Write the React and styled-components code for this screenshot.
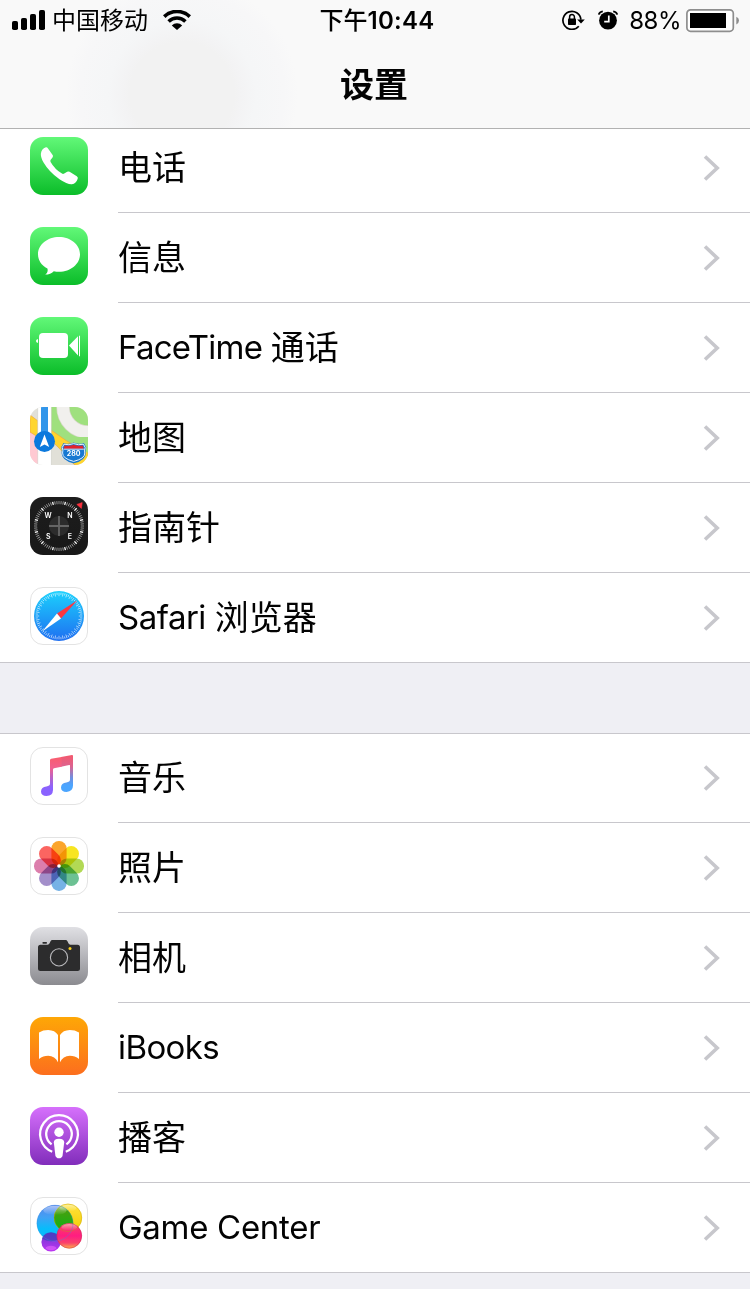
import React from "react"
import styled, { createGlobalStyle } from "styled-components"

const colors = {
  bar: "#f9f9f9",
  barLine: "#b2b2b2",
  page: "#efeff4",
  line: "#c8c7cc",
  white: "#ffffff",
  black: "#030303",
}

const GlobalStyle = createGlobalStyle`
  * {
    box-sizing: border-box;
  }

  body {
    margin: 0;
    background-color: ${colors.page};
    color: ${colors.black};
    font-family: Inter, "Noto Sans CJK SC", sans-serif;
  }
`

/* ---------- status bar ---------- */

const SignalIcon = () => (
  <svg width="34" height="22" viewBox="0 0 34 22">
    <rect x="0" y="12" width="6" height="9" rx="1.8" />
    <rect x="9" y="9" width="6" height="12" rx="1.8" />
    <rect x="18" y="5" width="6" height="16" rx="1.8" />
    <rect x="27" y="1" width="6" height="20" rx="1.8" />
  </svg>
)

const WifiIcon = () => (
  <svg width="28" height="20" viewBox="0 0 28 20">
    <path d="M1.2 6.6A18.6 18.6 0 0 1 26.8 6.6" fill="none" stroke="#000" strokeWidth="3.7" />
    <path d="M5.6 11.5A12 12 0 0 1 22.4 11.5" fill="none" stroke="#000" strokeWidth="3.5" />
    <path d="M14 20L8.8 15.4A7.2 7.2 0 0 1 19.2 15.4Z" />
  </svg>
)

const RotationLockIcon = () => (
  <svg width="23" height="20" viewBox="0 0 23 20">
    <path
      d="M16.8 16.2A9 9 0 1 1 18.9 9.6"
      fill="none"
      stroke="#000"
      strokeWidth="1.7"
    />
    <path d="M15.2 9.4H22.8L19 13.6Z" />
    <rect x="6" y="8.4" width="8" height="6.6" rx="0.8" />
    <path d="M7.6 9V7A2.4 2.4 0 0 1 12.4 7V9" fill="none" stroke="#000" strokeWidth="1.5" />
  </svg>
)

const AlarmIcon = () => (
  <svg width="20" height="20" viewBox="0 0 20 20">
    <circle cx="10" cy="10.6" r="8.9" />
    <path
      d="M0.8 4.6Q1.4 1.9 4.8 1.4M19.2 4.6Q18.6 1.9 15.2 1.4"
      fill="none"
      stroke="#000"
      strokeWidth="1.8"
    />
    <path d="M10.8 5.4V11.6H6.2" fill="none" stroke="#fff" strokeWidth="1.7" />
  </svg>
)

const BatteryIcon = () => (
  <svg width="54" height="24" viewBox="0 0 54 24">
    <rect x="0.9" y="0.9" width="46.4" height="21.4" rx="3.6" fill="#fff" stroke="#8e8e8e" strokeWidth="1.7" />
    <rect x="4" y="4" width="36" height="15" />
    <path d="M50.3 7.8Q53 9 53 11.6T50.3 15.4Z" fill="#8e8e8e" />
  </svg>
)

/* ---------- app icons ---------- */

const Gradient = ({ id, from, to }) => (
  <linearGradient id={id} x1="0" y1="0" x2="0" y2="1">
    <stop offset="0" stopColor={from} />
    <stop offset="1" stopColor={to} />
  </linearGradient>
)

const Tile = ({ id, from, to, children }) => (
  <svg width="58" height="58" viewBox="0 0 58 58">
    <defs>
      <Gradient id={id} from={from} to={to} />
    </defs>
    <rect width="58" height="58" rx="13" fill={`url(#${id})`} />
    {children}
  </svg>
)

const WhiteTile = ({ children }) => (
  <svg width="58" height="58" viewBox="0 0 58 58">
    <rect x="0.5" y="0.5" width="57" height="57" rx="12.5" fill="#fff" stroke="#e3e3e3" />
    {children}
  </svg>
)

const PhoneIcon = () => (
  <Tile id="phone" from="#62f878" to="#0bbd29">
    <path
      fill="#fff"
      d="M15.2 10.6Q16.9 9.8 18 11.4L22.8 18.2Q23.3 19.3 22.5 20.4L20.7 22.8Q20 23.9 20.6 25Q24.8 32.4 32 36.6Q33.1 37.2 34.2 36.5L37.2 34.8Q38.4 34.1 39.6 34.8L46.8 39.2Q48.3 40.2 47.7 41.8Q46.2 46.6 41.9 47.3Q37.6 47.7 29.5 42.3Q19 34.8 13.4 25.2Q10.4 19.8 10.9 16.4Q11.5 12.3 15.2 10.6Z"
    />
  </Tile>
)

const MessagesIcon = () => (
  <Tile id="messages" from="#62f878" to="#0bbd29">
    <path
      fill="#fff"
      d="M29 10C17.4 10 8 17.6 8 27.2C8 33.2 11.4 38.2 17.4 41.6C18.2 44 17.2 46.2 15.2 47.6C18.8 47.6 21.6 46.4 23.8 44.2C25.4 44.6 27.2 44.8 29 44.8C40.6 44.8 50 37 50 27.2C50 17.6 40.6 10 29 10Z"
    />
  </Tile>
)

const FaceTimeIcon = () => (
  <Tile id="facetime" from="#62f878" to="#0bbd29">
    <rect x="9" y="16" width="29" height="25" rx="4" fill="#fff" />
    <path fill="#fff" d="M39 28.5L48 19.2V38.6Z" />
    <path fill="#fff" d="M49 18.8H50V39.2H49Z" />
    <path fill="#fff" d="M8 22V26Q6 25.4 6 24T8 22Z" />
  </Tile>
)

const MapsIcon = () => (
  <svg width="58" height="58" viewBox="0 0 58 58">
    <defs>
      <clipPath id="mapsTile">
        <rect width="58" height="58" rx="13" />
      </clipPath>
    </defs>
    <g clipPath="url(#mapsTile)">
      <rect width="58" height="58" fill="#e1e0d8" />
      <path d="M21 0H58V52L21 24Z" fill="#9fe07e" />
      <circle cx="58" cy="0" r="25" fill="none" stroke="#d5d8c6" strokeWidth="13.4" />
      <circle cx="58" cy="0" r="25" fill="none" stroke="#f1f0ed" strokeWidth="12" />
      <rect y="24" width="8" height="34" fill="#ffc9d2" />
      <path d="M0 8L8 14V30L0 25Z" fill="#ffd52e" stroke="#f0a63c" strokeWidth="0.7" />
      <path
        d="M21 23L36 33.5Q42 38 50 38.4L58 46V58H45L38 52Q33 44 21 33.5Z"
        fill="#ffd52e"
        stroke="#f0a63c"
        strokeWidth="0.7"
      />
      <path d="M34 30L58 30V46L50 40Z" fill="#9fe07e" />
      <rect x="7.7" width="13.6" height="58" fill="#fff" />
      <path d="M7.7 0V58M21.4 0V58" stroke="#c9c8c0" strokeWidth="0.5" />
      <rect x="11" width="7" height="30" fill="#3296ea" />
      <circle cx="14.5" cy="34.4" r="10.5" fill="#0b79dd" />
      <path d="M14.5 27.4L19.2 40L14.5 37.4L9.8 40Z" fill="#fff" />
      <path
        d="M34 37.2Q39 38.6 43.7 36.6Q48.4 38.6 53.4 37.2L55.2 40.6Q54 43 54.8 46Q55 52.4 43.7 55.4Q32.4 52.4 32.6 46Q33.4 43 32.2 40.6Z"
        fill="#1879d2"
        stroke="#1879d2"
        strokeWidth="2"
      />
      <path
        d="M34 37.2Q39 38.6 43.7 36.6Q48.4 38.6 53.4 37.2L55.2 40.6Q54 43 54.8 46Q55 51.6 43.7 54.4Q32.4 51.6 32.6 46Q33.4 43 32.2 40.6Z"
        fill="#1879d2"
        stroke="#fff"
        strokeWidth="0.9"
      />
      <path d="M34.6 38.4Q39.6 39.4 43.7 37.8Q47.8 39.4 52.8 38.4L53.8 41.8H33.6Z" fill="#e0242f" />
      <path d="M33.6 42.2H53.8" stroke="#fff" strokeWidth="0.8" />
      <text
        x="43.7"
        y="49.2"
        textAnchor="middle"
        fontFamily="Inter, sans-serif"
        fontWeight="700"
        fontSize="7"
        fill="#fff"
      >
        280
      </text>
    </g>
  </svg>
)

const ticks = (count) => Array.from({ length: count }, (_, i) => (i * 360) / count)

const CompassIcon = () => (
  <Tile id="compass" from="#1d1d1d" to="#181818">
    {ticks(72).map((deg, i) => (
      <path
        key={deg}
        d="M29 4V7.2"
        stroke={(i + 3) % 6 === 0 ? "#ffffff" : "#a8a8a8"}
        strokeWidth={(i + 3) % 6 === 0 ? 1.3 : 0.8}
        transform={`rotate(${deg} 29 29)`}
      />
    ))}
    <circle cx="29" cy="29" r="10" fill="#2c2c2c" />
    <path d="M29 19V39M19 29H39" stroke="#656565" strokeWidth="1.8" />
    <path d="M46.8 7.4L52.2 5.6L51.4 11.4Z" fill="#fc2f3c" stroke="#fc2f3c" strokeWidth="0.6" />
    <g fill="#fff" fontFamily="Inter, sans-serif" fontWeight="600" fontSize="7" textAnchor="middle">
      <text x="18" y="21">W</text>
      <text x="39.8" y="21">N</text>
      <text x="18.3" y="42">S</text>
      <text x="39.8" y="42">E</text>
    </g>
  </Tile>
)

const SafariIcon = () => (
  <WhiteTile>
    <defs>
      <Gradient id="safari" from="#1bd1fd" to="#1f6ff1" />
    </defs>
    <circle cx="29" cy="29" r="25" fill="url(#safari)" />
    {ticks(72).map((deg, i) => (
      <path
        key={deg}
        d={i % 2 ? "M29 5.6V7.8" : "M29 5.6V9.2"}
        stroke="#fff"
        strokeOpacity="0.8"
        strokeWidth="0.7"
        transform={`rotate(${deg} 29 29)`}
      />
    ))}
    <path d="M47.4 13.2L31 31.4L27 26.6Z" fill="#fb3640" />
    <path d="M12.2 44.6L27 26.6L31 31.4Z" fill="#fff" />
  </WhiteTile>
)

const MusicIcon = () => (
  <WhiteTile>
    <defs>
      <linearGradient id="musicLeft" gradientUnits="userSpaceOnUse" x1="0" y1="8" x2="0" y2="48">
        <stop offset="0" stopColor="#fb5c66" />
        <stop offset="0.33" stopColor="#f0618f" />
        <stop offset="0.65" stopColor="#a763da" />
        <stop offset="0.82" stopColor="#8a62ff" />
      </linearGradient>
      <linearGradient id="musicRight" gradientUnits="userSpaceOnUse" x1="0" y1="8" x2="0" y2="46">
        <stop offset="0" stopColor="#f4586c" />
        <stop offset="0.3" stopColor="#dc6390" />
        <stop offset="0.6" stopColor="#6f8fe0" />
        <stop offset="0.8" stopColor="#4ba5ff" />
      </linearGradient>
    </defs>
    <path
      fill="url(#musicRight)"
      d="M31 10L42 8Q43 7.9 43 9V38.6Q43 44.6 36.6 45Q31 44.8 31 40.4Q31.2 36 36.4 35.4Q40 35.2 40 32.6V18.6Q40 17.8 39.2 18L31 19.8Z"
    />
    <path
      fill="url(#musicLeft)"
      d="M21.2 11.8L31.6 9.9V19.7L24 21.3Q23 21.6 23 22.6V43Q22.8 48.8 16.6 49Q11 48.8 11 44.4Q11.2 40 16.4 39.4Q20 39.2 20 36.6V13.2Q20 12 21.2 11.8Z"
    />
  </WhiteTile>
)

const petals = ["#fba52c", "#f7e521", "#b2d955", "#6cc193", "#76b2e6", "#a38fca", "#dc7eac", "#fb6561"]

const Petals = styled.g`
  isolation: isolate;

  rect {
    mix-blend-mode: multiply;
  }
`

const PhotosIcon = () => (
  <WhiteTile>
    <Petals>
      {petals.map((fill, i) => (
        <rect
          key={fill}
          x="21.4"
          y="4"
          width="15.2"
          height="24.4"
          rx="7.4"
          fill={fill}
          transform={`rotate(${i * 45} 29 29)`}
        />
      ))}
    </Petals>
    <circle cx="29" cy="29" r="1.8" fill="#fff" />
  </WhiteTile>
)

const CameraIcon = () => (
  <Tile id="camera" from="#e0e0e4" to="#8b8b90">
    <path
      fill="#2c2c2d"
      d="M10.5 17.8H17.6Q19 17.6 19.6 16.2L20.4 14.4Q21 13 22.6 13H35.4Q37 13 37.6 14.4L38.4 16.2Q39 17.6 40.4 17.8H47.5Q50 17.8 50 20.3V41.5Q50 44 47.5 44H10.5Q8 44 8 41.5V20.3Q8 17.8 10.5 17.8Z"
    />
    <rect x="12.4" y="15" width="4.6" height="1.8" rx="0.8" fill="#2c2c2d" />
    <circle cx="29" cy="30.4" r="8.6" fill="none" stroke="#b8b8bb" strokeWidth="1.1" />
    <circle cx="40" cy="21.5" r="1.5" fill="#f8cf1c" />
  </Tile>
)

const BooksIcon = () => (
  <Tile id="books" from="#fea706" to="#fc6e1e">
    <path
      fill="#fff"
      d="M9 15.4Q13 13 18.2 13Q25 13.2 28 18V45.2Q25 39.2 18.2 38.8Q13 38.8 9 42Z"
    />
    <path
      fill="#fff"
      d="M49 15.4Q45 13 39.8 13Q33 13.2 30 18V45.2Q33 39.2 39.8 38.8Q45 38.8 49 42Z"
    />
  </Tile>
)

const PodcastsIcon = () => (
  <Tile id="podcasts" from="#d670fc" to="#812dbb">
    <g fill="none" stroke="#fff" strokeWidth="2.3">
      <path d="M22.2 44.7A18.9 18.9 0 1 1 35.8 44.7" />
      <path d="M21.6 37.4A12.8 12.8 0 1 1 36.4 37.4" />
    </g>
    <circle cx="29" cy="25.2" r="4.7" fill="#fff" />
    <path
      fill="#fff"
      d="M29 31.8Q34.4 31.8 34.2 35.6L32.6 48.4Q32 51.2 29 51.2T25.4 48.4L23.8 35.6Q23.6 31.8 29 31.8Z"
    />
  </Tile>
)

const GameCenterIcon = () => (
  <WhiteTile>
    <defs>
      <linearGradient id="gcBlue" x1="0" y1="0" x2="0" y2="1">
        <stop offset="0" stopColor="#5a86ee" />
        <stop offset="0.35" stopColor="#3fa2f4" />
        <stop offset="0.65" stopColor="#08bcfb" />
      </linearGradient>
      <Gradient id="gcYellow" from="#ffe23c" to="#f3cd02" />
      <Gradient id="gcGreen" from="#5c9a0c" to="#08b416" />
      <Gradient id="gcPurple" from="#6938cf" to="#bd35f2" />
      <linearGradient id="gcPink" x1="0" y1="0" x2="0" y2="1">
        <stop offset="0" stopColor="#f9485e" />
        <stop offset="0.5" stopColor="#ff1c82" />
        <stop offset="0.78" stopColor="#f9426c" />
        <stop offset="1" stopColor="#fdb048" />
      </linearGradient>
      <linearGradient id="gcShine" x1="0" y1="0" x2="0" y2="1">
        <stop offset="0" stopColor="#fff" stopOpacity="0.5" />
        <stop offset="1" stopColor="#fff" stopOpacity="0" />
      </linearGradient>
      <clipPath id="gcBlueShape">
        <circle cx="25" cy="26.2" r="18.2" />
      </clipPath>
    </defs>
    <circle cx="25" cy="26.2" r="18.2" fill="url(#gcBlue)" />
    <circle cx="38" cy="20.8" r="14" fill="url(#gcYellow)" />
    <circle cx="38" cy="20.8" r="14" fill="url(#gcGreen)" clipPath="url(#gcBlueShape)" />
    <circle cx="21" cy="45" r="9.6" fill="url(#gcPurple)" />
    <path
      d="M12 41.5A9.6 9.6 0 0 1 30 41.5Q26 44 21 44.2Q16 44 12 41.5Z"
      fill="#3d3fbb"
      fillOpacity="0.65"
    />
    <circle cx="39.3" cy="38.8" r="12.6" fill="url(#gcPink)" />
    <ellipse cx="25" cy="13.4" rx="11.6" ry="4.6" fill="url(#gcShine)" />
    <ellipse cx="38" cy="11" rx="8.6" ry="3.4" fill="url(#gcShine)" />
    <ellipse cx="39.3" cy="30" rx="8" ry="3.4" fill="url(#gcShine)" />
    <ellipse cx="21" cy="51" rx="5.4" ry="2.2" fill="#f070ff" fillOpacity="0.5" />
    <g fill="none" strokeWidth="0.6">
      <circle cx="25" cy="26.2" r="18" stroke="#3c8de0" strokeOpacity="0.6" />
      <circle cx="38" cy="20.8" r="13.8" stroke="#bd9b10" strokeOpacity="0.6" />
      <circle cx="39.3" cy="38.8" r="12.4" stroke="#c92650" strokeOpacity="0.8" />
    </g>
  </WhiteTile>
)

const Chevron = () => (
  <svg width="18" height="28" viewBox="0 0 18 28">
    <path d="M2 2.5L14.2 14L2 25.5" fill="none" stroke="#c7c7cc" strokeWidth="3.6" />
  </svg>
)

/* ---------- layout ---------- */

const Screen = styled.div`
  width: 750px;
  height: 1289px;
  overflow: hidden;
  background-color: ${colors.page};

  svg {
    display: block;
    flex: none;
  }
`

const Header = styled.header`
  height: 129px;
  border-bottom: 1px solid ${colors.barLine};
  background: radial-gradient(
      circle at 182px 94px,
      #f2f2f2 0 52px,
      #f3f3f4 59px,
      #f5f6f7 74px,
      #f7f7f8 102px,
      rgba(249, 249, 249, 0) 116px
    )
    ${colors.bar};
`

const StatusBar = styled.div`
  display: grid;
  grid-template-columns: 1fr auto 1fr;
  align-items: center;
  height: 40px;
  padding: 0 10px 0 12px;
  color: #000;
  font-size: 24px;
  line-height: 40px;
`

const StatusGroup = styled.div`
  display: flex;
  align-items: center;
  justify-content: ${({ $end }) => ($end ? "flex-end" : "flex-start")};
  white-space: nowrap;
`

const Carrier = styled.span`
  height: 40px;
  margin: 0 15px 0 6px;
  line-height: 41px;
`

const Clock = styled.time`
  height: 40px;
  padding-left: 2px;
  font-weight: 500;
  line-height: 41px;
  white-space: nowrap;
`

const ClockDigits = styled.span`
  font-weight: 600;
  letter-spacing: 0.25px;
`

const BatteryLevel = styled.span`
  height: 40px;
  margin: 0 5px 0 11px;
  line-height: 42px;
  letter-spacing: -0.5px;
`

const BatteryBox = styled.div`
  margin-top: 2px;
`

const Spacer = styled.span`
  width: 13px;
`

const Title = styled.h1`
  margin: 0;
  padding: 20px 2px 0 0;
  font-size: 34px;
  font-weight: 600;
  line-height: 50px;
  text-align: center;
`

const Group = styled.ul`
  margin: ${({ $clipped }) => ($clipped ? "0" : "70px 0 0")};
  padding: 0;
  border-top: ${({ $clipped }) => ($clipped ? "none" : `1px solid ${colors.line}`)};
  border-bottom: 1px solid ${colors.line};
  background-color: ${colors.white};
  list-style: none;
`

const Row = styled.li`
  display: flex;
  height: ${({ $height }) => $height}px;
  padding-left: 30px;
`

const RowIcon = styled.div`
  display: flex;
  flex: none;
  align-items: flex-end;
  width: 88px;
  padding-bottom: ${({ $last }) => ($last ? 17 : 18)}px;
`

const RowBody = styled.div`
  display: flex;
  flex: 1;
  align-items: flex-end;
  justify-content: space-between;
  padding-right: 29px;
  border-bottom: ${({ $last }) => ($last ? "none" : `1px solid ${colors.line}`)};
`

const Label = styled.div`
  display: flex;
  height: 89px;
  line-height: 90px;
  font-size: 34px;
  white-space: pre;
`

const Latin = styled.span`
  font-size: 33px;
  line-height: 89px;
  letter-spacing: ${({ $tracking }) => $tracking}px;
`

const Arrow = styled.div`
  padding-bottom: 30px;
`

const SettingsRow = ({ Icon, latin, tracking, text, height = 90, last }) => (
  <Row $height={last ? height - 1 : height}>
    <RowIcon $last={last}>
      <Icon />
    </RowIcon>
    <RowBody $last={last}>
      <Label>
        {latin && <Latin $tracking={tracking}>{latin}</Latin>}
        {text && <span>{text}</span>}
      </Label>
      <Arrow>
        <Chevron />
      </Arrow>
    </RowBody>
  </Row>
)

// the first row of each group is shorter: one sits under the header, one under the group's top line
const groups = [
  [
    { Icon: PhoneIcon, text: "电话", height: 84 },
    { Icon: MessagesIcon, text: "信息" },
    { Icon: FaceTimeIcon, latin: "FaceTime ", tracking: -0.75, text: "通话" },
    { Icon: MapsIcon, text: "地图" },
    { Icon: CompassIcon, text: "指南针" },
    { Icon: SafariIcon, latin: "Safari ", tracking: -0.5, text: "浏览器" },
  ],
  [
    { Icon: MusicIcon, text: "音乐", height: 89 },
    { Icon: PhotosIcon, text: "照片" },
    { Icon: CameraIcon, text: "相机" },
    { Icon: BooksIcon, latin: "iBooks", tracking: -0.6 },
    { Icon: PodcastsIcon, text: "播客" },
    { Icon: GameCenterIcon, latin: "Game Center", tracking: -0.3 },
  ],
]

const App = () => (
  <>
    <GlobalStyle />
    <Screen>
      <Header>
        <StatusBar>
          <StatusGroup>
            <SignalIcon />
            <Carrier>中国移动</Carrier>
            <WifiIcon />
          </StatusGroup>
          <Clock>
            下午<ClockDigits>10:44</ClockDigits>
          </Clock>
          <StatusGroup $end>
            <RotationLockIcon />
            <Spacer />
            <AlarmIcon />
            <BatteryLevel>88%</BatteryLevel>
            <BatteryBox>
              <BatteryIcon />
            </BatteryBox>
          </StatusGroup>
        </StatusBar>
        <Title>设置</Title>
      </Header>
      {groups.map((rows, g) => (
        <Group key={g} $clipped={g === 0}>
          {rows.map((row, i) => (
            <SettingsRow key={i} {...row} last={i === rows.length - 1} />
          ))}
        </Group>
      ))}
    </Screen>
  </>
)

export default App
